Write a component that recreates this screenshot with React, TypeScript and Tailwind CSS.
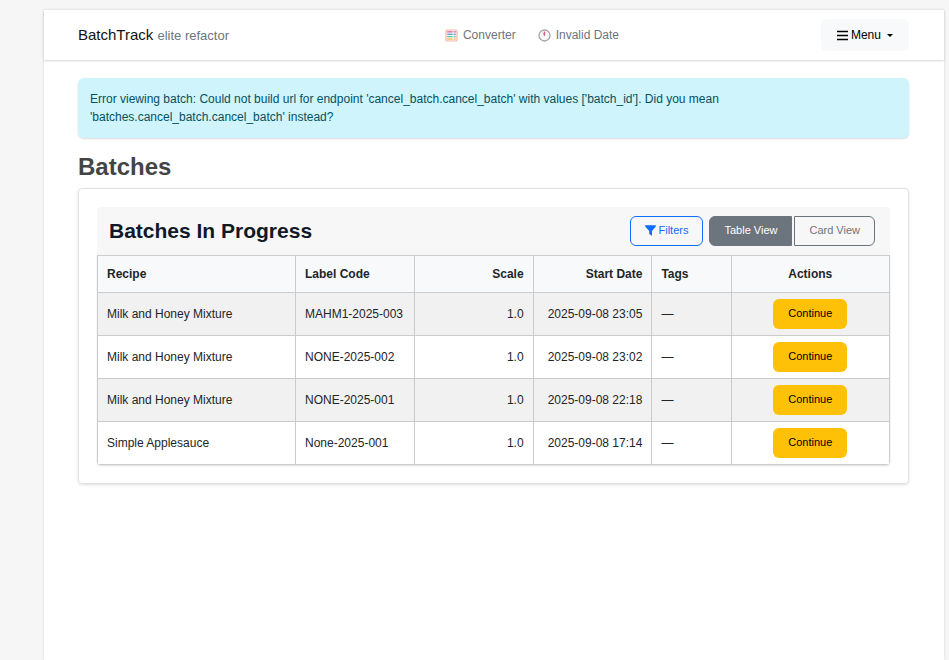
import React from "react";

type Batch = { recipe: string; label: string; scale: string; start: string };

const batches: Batch[] = [
  { recipe: "Milk and Honey Mixture", label: "MAHM1-2025-003", scale: "1.0", start: "2025-09-08 23:05" },
  { recipe: "Milk and Honey Mixture", label: "NONE-2025-002", scale: "1.0", start: "2025-09-08 23:02" },
  { recipe: "Milk and Honey Mixture", label: "NONE-2025-001", scale: "1.0", start: "2025-09-08 22:18" },
  { recipe: "Simple Applesauce", label: "None-2025-001", scale: "1.0", start: "2025-09-08 17:14" },
];

function AbacusIcon() {
  const rows = [
    { y: 2.2, color: "#e95fa8" },
    { y: 4.6, color: "#4aa0ec" },
    { y: 7, color: "#5fd0a8" },
    { y: 9.4, color: "#f2b95c" },
  ];
  return (
    <svg className="h-[13px] w-[13px]" viewBox="0 0 13 13" aria-hidden="true">
      <rect x="1" y="1" width="11" height="11" rx="1" fill="#fdf6f3" stroke="#f5b9a3" strokeWidth="1.2" />
      {rows.map((r) => (
        <g key={r.y} fill={r.color}>
          <rect x="2.2" y={r.y} width="5.4" height="1.3" />
          <rect x="8.6" y={r.y} width="2.2" height="1.3" />
        </g>
      ))}
    </svg>
  );
}

function ClockIcon() {
  return (
    <svg className="h-[13px] w-[13px]" viewBox="0 0 13 13" aria-hidden="true">
      <circle cx="6.5" cy="6.5" r="5.5" fill="#f8f6f6" stroke="#a3a3a3" strokeWidth="1.3" />
      <path d="M6.5 7V2.6" stroke="#d9577a" strokeWidth="1.3" />
      <path d="M6.5 6.8L5 3.6" stroke="#a9a0a4" strokeWidth="0.8" />
    </svg>
  );
}

function BarsIcon() {
  return (
    <svg className="h-[11px] w-[11px]" viewBox="0 0 11 11" aria-hidden="true">
      <path d="M0 1.5h11M0 5.5h11M0 9.5h11" stroke="#000" strokeWidth="1.4" />
    </svg>
  );
}

function FunnelIcon() {
  return (
    <svg className="h-[11px] w-[11px]" viewBox="0 0 11 11" aria-hidden="true">
      <path d="M0.2 0.3h10.6v1.2L7 5.9V10.8L4.2 8.9V5.9L0.2 1.5z" fill="#0d6efd" />
    </svg>
  );
}

const cell = "border border-[#ccc] px-[9px] py-1.5";

export default function App() {
  return (
    <div className="min-h-screen bg-[#f6f6f6] pt-2.5 pr-[5px] pl-11 text-xs leading-[18px] text-[#212529] [font-family:'Liberation_Sans',Arial,sans-serif]">
      <div className="flex min-h-[calc(100vh-10px)] flex-col bg-white shadow-[0_0_3px_rgba(0,0,0,0.12)]">
        <header className="flex h-[50px] items-center justify-between bg-white pr-[35px] pl-[34px] shadow-[0_1px_2px_rgba(0,0,0,0.16)]">
          <a href="#" className="text-[15px] text-[#111]">
            BatchTrack <small className="text-[13px] text-[#6c757d]">elite refactor</small>
          </a>
          <nav className="flex items-center gap-[22px] pl-3.5 text-[#6c757d]">
            <a href="#" className="flex items-center gap-[5px]">
              <AbacusIcon />
              Converter
            </a>
            <span className="flex items-center gap-[5px]">
              <ClockIcon />
              Invalid Date
            </span>
          </nav>
          <button type="button" className="flex h-8 items-center rounded-md bg-[#f8f9fa] px-4 text-black">
            <BarsIcon />
            <span className="ml-[3px]">Menu</span>
            <span className="ml-1.5 border-x-[3px] border-t-[3px] border-x-transparent border-t-black" />
          </button>
        </header>

        <main className="pt-[18px] pr-[35px] pl-[34px]">
          <div role="alert" className="rounded-md bg-[#cff4fc] p-3 text-[#055160] shadow-[0_1px_2px_rgba(0,0,0,0.15)]">
            Error viewing batch: Could not build url for endpoint 'cancel_batch.cancel_batch' with values ['batch_id']. Did you mean
            <br />
            'batches.cancel_batch.cancel_batch' instead?
          </div>

          <h1 className="mt-3.5 mb-[7px] text-2xl leading-[29px] font-bold text-[#444]">Batches</h1>

          <section className="rounded border border-[#dee2e6] p-[18px] shadow-[0_1px_3px_rgba(0,0,0,0.12)]">
            <div className="flex h-12 items-center justify-between rounded-t-sm bg-[#f7f7f7] pr-[15px] pl-3">
              <h2 className="text-[21px] leading-6 font-bold text-[#111827]">Batches In Progress</h2>
              <div className="flex gap-1.5 text-[11px] leading-4">
                <button type="button" className="flex h-[30px] items-center gap-[3px] rounded-md border border-[#0d6efd] px-3.5 pb-0.5 text-[#0d6efd]">
                  <FunnelIcon />
                  Filters
                </button>
                <div className="flex gap-0.5">
                  <button type="button" className="h-[30px] rounded-l-md border border-[#6c757d] bg-[#6c757d] px-3.5 pb-0.5 text-white">
                    Table View
                  </button>
                  <button type="button" className="h-[30px] rounded-r-md border border-[#6c757d] px-3.5 pb-0.5 text-[#6c757d]">
                    Card View
                  </button>
                </div>
              </div>
            </div>

            <div className="overflow-hidden rounded-b shadow-[0_1px_2px_rgba(0,0,0,0.14)]">
              <table className="w-full table-fixed border-collapse">
                <thead>
                  <tr className="h-[37px] bg-[#f8f9fa]">
                    <th className={`${cell} w-[25%] text-left`}>Recipe</th>
                    <th className={`${cell} w-[15%] text-left`}>Label Code</th>
                    <th className={`${cell} w-[15%] text-right`}>Scale</th>
                    <th className={`${cell} w-[15%] text-right`}>Start Date</th>
                    <th className={`${cell} w-[10%] text-left`}>Tags</th>
                    <th className={`${cell} w-[20%] text-center`}>Actions</th>
                  </tr>
                </thead>
                <tbody>
                  {batches.map((b) => (
                    <tr key={b.label} className="odd:bg-[#f1f1f1] even:bg-white">
                      <td className={cell}>{b.recipe}</td>
                      <td className={cell}>{b.label}</td>
                      <td className={`${cell} text-right`}>{b.scale}</td>
                      <td className={`${cell} text-right whitespace-nowrap`}>{b.start}</td>
                      <td className={cell}>—</td>
                      <td className={`${cell} text-center`}>
                        <a href="#" className="inline-block h-[30px] rounded-md bg-[#ffc107] px-[15px] align-top text-[11px] leading-[29px] text-black">
                          Continue
                        </a>
                      </td>
                    </tr>
                  ))}
                </tbody>
              </table>
            </div>
          </section>
        </main>
      </div>
    </div>
  );
}
